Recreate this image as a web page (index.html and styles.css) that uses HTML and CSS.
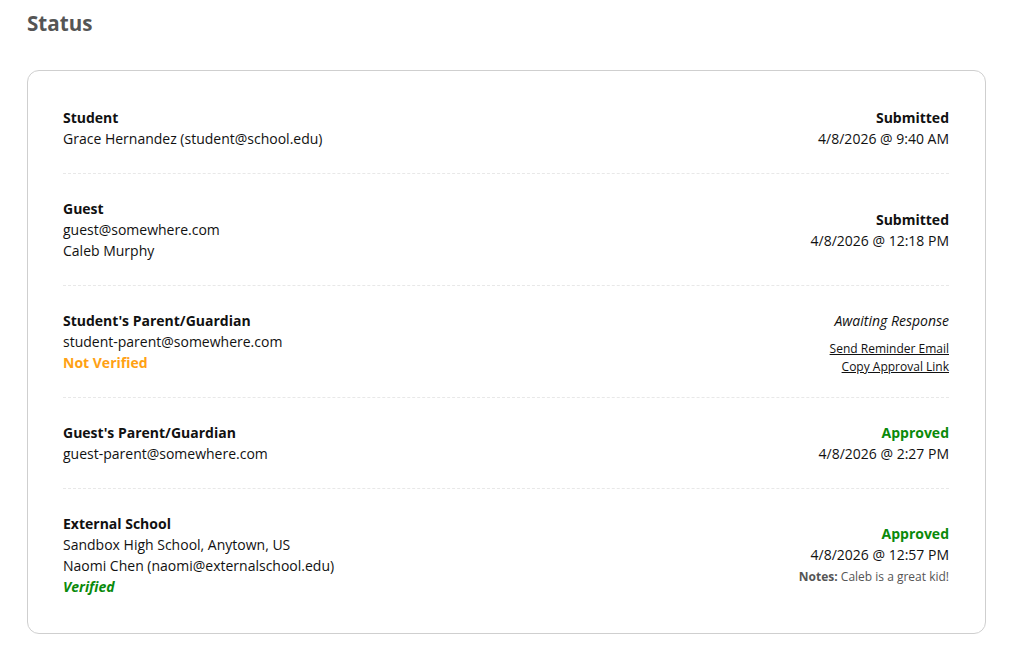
FILE: index.html
```html
<!DOCTYPE html>
<html lang="en">
<head>
<meta charset="utf-8">
<title>Status</title>
<link rel="stylesheet" href="styles.css">
</head>
<body>
<h2 class="title">Status</h2>
<div class="card">
  <div class="row">
    <div class="left">
      <div class="label">Student</div>
      <div>Grace Hernandez (student@school.edu)</div>
    </div>
    <div class="right">
      <div class="strong">Submitted</div>
      <div>4/8/2026 @ 9:40 AM</div>
    </div>
  </div>
  <div class="row">
    <div class="left">
      <div class="label">Guest</div>
      <div>guest@somewhere.com</div>
      <div>Caleb Murphy</div>
    </div>
    <div class="right">
      <div class="strong">Submitted</div>
      <div>4/8/2026 @ 12:18 PM</div>
    </div>
  </div>
  <div class="row">
    <div class="left">
      <div class="label">Student's Parent/Guardian</div>
      <div>student-parent@somewhere.com</div>
      <div class="warn">Not Verified</div>
    </div>
    <div class="right">
      <div class="italic">Awaiting Response</div>
      <div class="links">
        <a href="#" class="link">Send Reminder Email</a>
        <a href="#" class="link">Copy Approval Link</a>
      </div>
    </div>
  </div>
  <div class="row">
    <div class="left">
      <div class="label">Guest's Parent/Guardian</div>
      <div>guest-parent@somewhere.com</div>
    </div>
    <div class="right">
      <div class="ok">Approved</div>
      <div>4/8/2026 @ 2:27 PM</div>
    </div>
  </div>
  <div class="row">
    <div class="left">
      <div class="label">External School</div>
      <div>Sandbox High School, Anytown, US</div>
      <div>Naomi Chen (naomi@externalschool.edu)</div>
      <div class="ok italic">Verified</div>
    </div>
    <div class="right">
      <div class="ok">Approved</div>
      <div>4/8/2026 @ 12:57 PM</div>
      <div class="notes"><b>Notes:</b> Caleb is a great kid!</div>
    </div>
  </div>
</div>
</body>
</html>
```
FILE: styles.css
```css
html, body {
  margin: 0;
  background: #fff;
}
body {
  padding: 0 28px 0 27px;
  font-family: "Open Sans", "Liberation Sans", sans-serif;
  font-size: 14px;
  line-height: 21px;
  color: #111;
}
.title {
  margin: 10px 0 33px;
  font-size: 20.6px;
  line-height: 27px;
  font-weight: 700;
  color: #555;
}
.card {
  border: 1px solid #cfcfcf;
  border-radius: 12px;
  padding: 12px 36px 12px 35px;
}
.row {
  display: flex;
  justify-content: space-between;
  align-items: center;
  padding: 24px 0;
}
.row + .row {
  border-top: 1px dashed #e8e8e8;
}
.label {
  font-weight: 700;
}
.right {
  text-align: right;
}
.strong {
  font-weight: 700;
}
.italic {
  font-style: italic;
}
.warn {
  color: #ffa114;
  font-weight: 700;
}
.ok {
  color: #0a8a0a;
  font-weight: 700;
}
.links {
  margin: 9px 0 -3px;
  display: flex;
  flex-direction: column;
  align-items: flex-end;
}
.link {
  font-size: 12px;
  line-height: 18px;
  color: #111;
  text-decoration: underline;
}
.notes {
  margin: 1px 0 -1px;
  font-size: 12px;
  line-height: 22px;
  color: #555;
}
```
